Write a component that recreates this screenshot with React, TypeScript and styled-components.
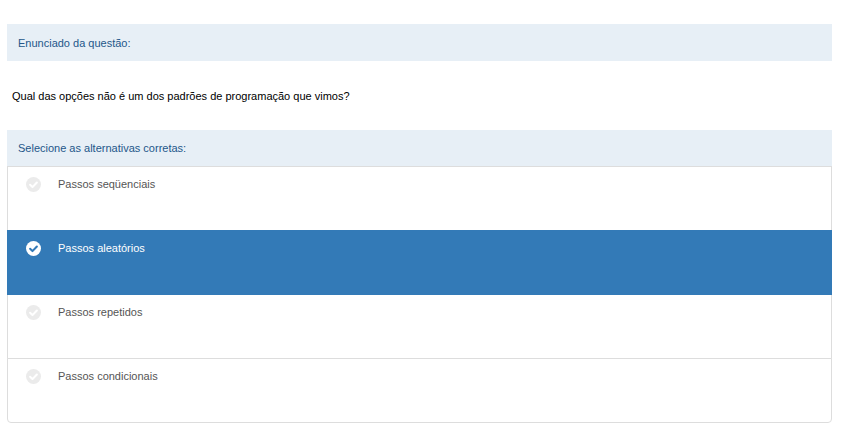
import React from 'react';
import styled, { createGlobalStyle } from 'styled-components';

const GlobalStyle = createGlobalStyle`
  html, body {
    margin: 0;
    padding: 0;
    background: #fff;
    font-family: "Liberation Sans", Arial, sans-serif;
  }
`;

interface Alternative {
  label: string
  selected?: boolean
}

const alternatives: Alternative[] = [
  { label: 'Passos seqüenciais' },
  { label: 'Passos aleatórios', selected: true },
  { label: 'Passos repetidos' },
  { label: 'Passos condicionais' },
];

function CheckIcon({ active }: { active: boolean }) {
  return (
    <svg width="15" height="15" viewBox="0 0 16 16">
      <circle cx="8" cy="8" r="8" fill={active ? '#fff' : '#ebebeb'} />
      <path
        d="M4.4 8.3 L6.9 10.8 L11.6 5.9"
        fill="none"
        stroke={active ? '#337ab7' : '#fff'}
        strokeWidth="2.2"
        strokeLinecap="round"
        strokeLinejoin="round"
      />
    </svg>
  );
}

export default function App() {
  return (
    <>
      <GlobalStyle />
      <Page>
        <SectionTitle $height={37}>Enunciado da questão:</SectionTitle>
        <Question>Qual das opções não é um dos padrões de programação que vimos?</Question>
        <SectionTitle $height={36}>Selecione as alternativas corretas:</SectionTitle>
        <OptionList>
          {alternatives.map(({ label, selected }) => (
            <OptionItem key={label} $selected={!!selected}>
              <IconBox>
                <CheckIcon active={!!selected} />
              </IconBox>
              <OptionLabel>{label}</OptionLabel>
            </OptionItem>
          ))}
        </OptionList>
      </Page>
    </>
  );
}

const Page = styled.div`
  display: flex;
  flex-direction: column;
  width: 825px;
  padding: 24px 0 0 7px;
`

const SectionTitle = styled.div<{ $height: number }>`
  display: flex;
  align-items: center;
  height: ${p => p.$height}px;
  padding-left: 11px;
  background: #e7eff6;
  color: #24578a;
  font-size: 11px;
`

const Question = styled.div`
  display: flex;
  align-items: center;
  height: 69px;
  padding-left: 5px;
  color: #000;
  font-size: 11px;
`

const OptionList = styled.div`
  display: flex;
  flex-direction: column;
  width: 825px;
`

const OptionItem = styled.div<{ $selected: boolean }>`
  position: relative;
  z-index: ${p => (p.$selected ? 2 : 1)};
  display: flex;
  align-items: flex-start;
  height: 65px;
  margin-bottom: -1px;
  padding: 10px 0 0 18px;
  box-sizing: border-box;
  border: 1px solid ${p => (p.$selected ? '#337ab7' : '#dddddd')};
  background: ${p => (p.$selected ? '#337ab7' : '#fff')};
  color: ${p => (p.$selected ? '#fff' : '#555')};
  font-size: 11px;

  &:last-child {
    margin-bottom: 0;
    border-radius: 0 0 4px 4px;
  }
`

const IconBox = styled.div`
  display: flex;
  width: 15px;
  height: 15px;
  margin-right: 17px;
`

const OptionLabel = styled.span`
  line-height: 15px;
`
